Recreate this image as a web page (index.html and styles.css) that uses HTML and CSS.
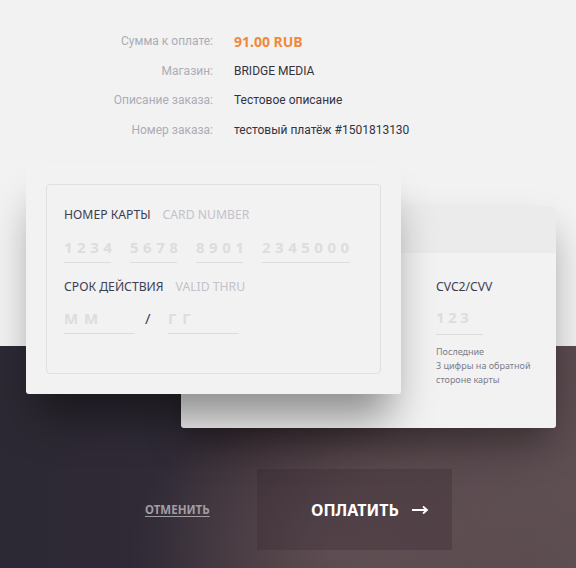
FILE: index.html
```html
<!DOCTYPE html>
<html lang="ru">
<head>
<meta charset="utf-8">
<title>Оплата</title>
<link rel="stylesheet" href="styles.css">
</head>
<body>
<div class="page">
  <div class="dark-bg"></div>
  <section class="info">
    <div class="info-label">Сумма к оплате:</div><div class="info-value amount">91.00 RUB</div>
    <div class="info-label">Магазин:</div><div class="info-value">BRIDGE MEDIA</div>
    <div class="info-label">Описание заказа:</div><div class="info-value">Тестовое описание</div>
    <div class="info-label">Номер заказа:</div><div class="info-value">тестовый платёж #1501813130</div>
  </section>

  <section class="cards">
    <div class="card-back">
      <div class="stripe"></div>
      <div class="cvc">
        <div class="label-ru">CVC2/CVV</div>
        <div class="field field-cvc">123</div>
        <div class="cvc-note">Последние<br>3 цифры на обратной<br>стороне карты</div>
      </div>
    </div>
    <div class="card-front">
      <div class="card-inner">
        <div class="label-row"><span class="label-ru">НОМЕР КАРТЫ</span><span class="label-en">CARD NUMBER</span></div>
        <div class="number-row">
          <div class="field f4">1234</div>
          <div class="field f4">5678</div>
          <div class="field f4">8901</div>
          <div class="field f7">2345000</div>
        </div>
        <div class="label-row"><span class="label-ru">СРОК ДЕЙСТВИЯ</span><span class="label-en">VALID THRU</span></div>
        <div class="exp-row">
          <div class="field fexp">М М</div>
          <span class="slash">/</span>
          <div class="field fexp">Г Г</div>
        </div>
      </div>
    </div>
  </section>

  <section class="actions">
    <a class="cancel" href="#">ОТМЕНИТЬ</a>
    <button class="pay">ОПЛАТИТЬ<svg class="arrow" width="17" height="10" viewBox="0 0 17 10"><path d="M0 5H15M11 1.5L15 5L11 8.5" fill="none" stroke="#ffffff" stroke-width="1.8"/></svg></button>
  </section>
</div>
</body>
</html>
```

FILE: styles.css
```css
* { box-sizing: border-box; }
html, body { margin: 0; padding: 0; }
body {
  width: 576px;
  height: 568px;
  overflow: hidden;
  background: #f2f2f2;
  font-family: "Noto Sans", "Open Sans", sans-serif;
}
.page {
  position: relative;
  height: 568px;
}
.dark-bg {
  position: absolute;
  left: 0; right: 0; top: 346px; bottom: 0;
  background:
    radial-gradient(ellipse 200px 150px at 330px 200px, rgba(112,94,97,0.55), rgba(112,94,97,0) 100%),
    radial-gradient(ellipse 260px 200px at 560px 150px, rgba(100,84,88,0.6), rgba(100,84,88,0) 100%),
    linear-gradient(90deg, #2d2934 0%, #2f2a36 28%, #3e3139 45%, #4e3f44 65%, #58494d 100%);
}
.info {
  position: relative;
  display: grid;
  grid-template-columns: 213px 1fr;
  column-gap: 21px;
  padding-top: 27px;
  font-family: Roboto, "Noto Sans", sans-serif;
  font-size: 12px;
  line-height: 29.5px;
}
.info-label { text-align: right; color: #acacb6; }
.info-value { color: #33333f; }
.amount { color: #ef8a3c; font-weight: 700; font-size: 14px; font-family: "Noto Sans", sans-serif; }

.cards {
  position: relative;
  display: grid;
  margin-top: 19px;
}
.card-front, .card-back { grid-area: 1 / 1; width: 375px; background: #f2f2f2; border-radius: 3px; }
.card-front {
  margin-left: 26px;
  height: 230px;
  padding: 20px;
  box-shadow: 0 34px 40px -10px rgba(0,0,0,0.42);
  z-index: 2;
}
.card-back {
  margin-left: 181px;
  margin-top: 43px;
  height: 221px;
  box-shadow: 0 20px 36px -6px rgba(0,0,0,0.38);
  z-index: 1;
}
.stripe { height: 46px; background: #ebebeb; border-radius: 3px 3px 0 0; }
.cvc { padding: 22px 0 0 255px; }
.cvc .field-cvc { width: 47px; margin-top: 4px; letter-spacing: 3.5px; height: 32px; }
.cvc-note { margin-top: 10px; font-size: 9px; line-height: 14px; color: #7c7c8a; }

.card-inner {
  height: 190px;
  border: 1px solid #dfdfdf;
  border-radius: 4px;
  padding: 18px 17px 0 17px;
}
.label-row { font-size: 12.2px; line-height: 24px; height: 24px; white-space: nowrap; }
.label-ru { color: #3d3d52; font-size: 12.2px; line-height: 24px; }
.label-en { color: #c2c2ca; margin-left: 12px; }

.field {
  height: 30px;
  border-bottom: 1px solid #dcdcdc;
  color: #dddddd;
  font-weight: 700;
  font-size: 15px;
  line-height: 28px;
  letter-spacing: 4.5px;
  white-space: nowrap;
}
.number-row { display: flex; gap: 19px; margin-top: 6px; margin-bottom: 12px; }
.f4 { width: 47px; }
.f7 { width: 88px; }
.exp-row { display: flex; align-items: flex-end; margin-top: 5px; }
.fexp { width: 71px; letter-spacing: 1px; height: 30px; line-height: 29px; }
.slash { color: #444454; font-size: 15px; line-height: 29px; height: 30px; width: 33px; padding-left: 10px; }

.actions {
  position: relative;
  display: flex;
  align-items: center;
  margin-top: 41px;
  padding-left: 145px;
}
.cancel {
  color: #a29ca3;
  font-size: 11.5px;
  font-weight: 700;
  text-decoration: underline;
  text-underline-offset: 2px;
  width: 112px;
}
.pay {
  display: flex;
  align-items: center;
  width: 195px;
  height: 81px;
  border: 0;
  background: rgba(50,36,48,0.28);
  color: #ffffff;
  font-family: inherit;
  font-weight: 700;
  font-size: 16px;
  padding: 0 0 0 54px;
}
.arrow { margin-left: 13px; margin-top: 1px; }
```
